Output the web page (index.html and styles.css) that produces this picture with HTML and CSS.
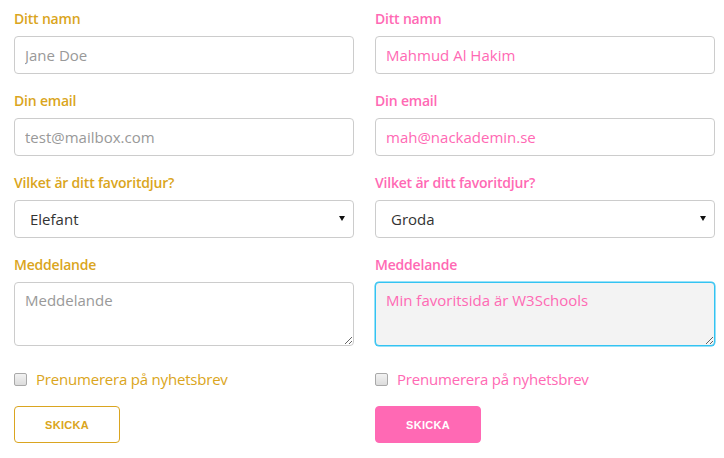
FILE: index.html
```html
<!DOCTYPE html>
<html lang="sv">
<head>
<meta charset="utf-8">
<title>Formulär</title>
<link rel="stylesheet" href="styles.css">
</head>
<body>
<div class="page">
  <form class="form gold">
    <div class="group">
      <label class="label">Ditt namn</label>
      <input class="field" type="text" placeholder="Jane Doe">
    </div>
    <div class="group">
      <label class="label">Din email</label>
      <input class="field" type="text" placeholder="test@mailbox.com">
    </div>
    <div class="group">
      <label class="label">Vilket är ditt favoritdjur?</label>
      <div class="select-wrap">
        <select class="field select"><option>Elefant</option></select>
      </div>
    </div>
    <div class="group group-area">
      <label class="label">Meddelande</label>
      <textarea class="field area" placeholder="Meddelande"></textarea>
    </div>
    <div class="check-row">
      <span class="box"></span>
      <span class="check-text">Prenumerera på nyhetsbrev</span>
    </div>
    <button class="btn btn-outline" type="button">SKICKA</button>
  </form>

  <form class="form pink">
    <div class="group">
      <label class="label">Ditt namn</label>
      <input class="field" type="text" value="Mahmud Al Hakim">
    </div>
    <div class="group">
      <label class="label">Din email</label>
      <input class="field" type="text" value="mah@nackademin.se">
    </div>
    <div class="group">
      <label class="label">Vilket är ditt favoritdjur?</label>
      <div class="select-wrap">
        <select class="field select"><option>Groda</option></select>
      </div>
    </div>
    <div class="group group-area">
      <label class="label">Meddelande</label>
      <textarea class="field area area-focus">Min favoritsida är W3Schools</textarea>
    </div>
    <div class="check-row">
      <span class="box"></span>
      <span class="check-text">Prenumerera på nyhetsbrev</span>
    </div>
    <button class="btn btn-solid" type="button">SKICKA</button>
  </form>
</div>
</body>
</html>
```

FILE: styles.css
```css
* { box-sizing: border-box; }

body {
  margin: 0;
  background: #fff;
  font-family: "Open Sans", "Liberation Sans", sans-serif;
}

.page {
  display: grid;
  grid-template-columns: 340px 340px;
  column-gap: 21px;
  padding: 7px 9px 0 14px;
}

.form {
  display: flex;
  flex-direction: column;
  align-items: flex-start;
}

.gold { color: #daa520; }
.pink { color: #ff69b4; }

.group {
  display: flex;
  flex-direction: column;
  width: 100%;
  margin-bottom: 15px;
}

.group-area { margin-bottom: 21px; }

.label {
  font-size: 14px;
  font-weight: 600;
  line-height: 22px;
  letter-spacing: -0.2px;
  margin-bottom: 7px;
  padding-top: 1px;
  height: 22px;
}

.field {
  width: 100%;
  height: 38px;
  border: 1px solid #ccc;
  border-radius: 4px;
  padding: 0 10px;
  font-family: inherit;
  font-size: 15px;
  color: inherit;
  background: #fff;
  outline: none;
}

.field::placeholder { color: #999; }

.select-wrap {
  position: relative;
  width: 100%;
}

.select {
  appearance: none;
  -webkit-appearance: none;
  padding-left: 15px;
  color: #333;
}

.select-wrap::after {
  content: "";
  position: absolute;
  right: 9px;
  top: 16px;
  border-left: 3px solid transparent;
  border-right: 3px solid transparent;
  border-top: 5px solid #111;
}

.area {
  height: 64px;
  padding: 6px 10px;
  resize: vertical;
  line-height: 22px;
}

.area-focus {
  background: #f3f3f3;
  border-color: #33c3f2;
  box-shadow: 0 0 0 0.5px #33c3f2;
}

.check-row {
  display: flex;
  align-items: center;
  gap: 9px;
  height: 24px;
  margin-bottom: 15px;
}

.box {
  width: 13px;
  height: 13px;
  border: 1px solid #a9a9a9;
  border-radius: 2px;
  background: linear-gradient(#f2f2f2, #dcdcdc);
}

.check-text {
  font-size: 15px;
  line-height: 24px;
  letter-spacing: -0.2px;
}

.btn {
  width: 106px;
  height: 37px;
  border-radius: 4px;
  font-family: "Liberation Sans", Arial, sans-serif;
  font-weight: 700;
  font-size: 11px;
  letter-spacing: 0.3px;
  padding: 0;
}

.btn-outline {
  background: #fff;
  border: 1px solid #daa520;
  color: #daa520;
}

.btn-solid {
  background: #ff69b4;
  border: 1px solid #ff69b4;
  color: #fff;
}
```
